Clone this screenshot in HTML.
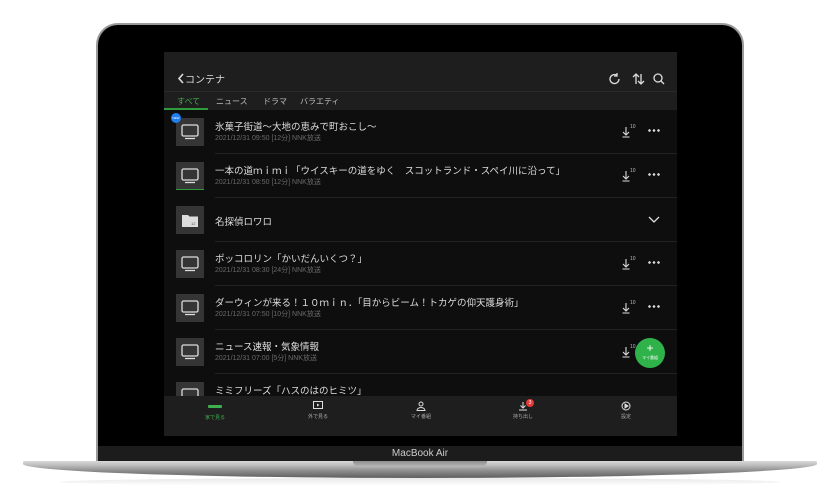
<!DOCTYPE html>
<html><head><meta charset="utf-8"><style>
*{margin:0;padding:0;box-sizing:border-box}
body{width:840px;height:502px;background:#fff;position:relative;overflow:hidden;font-family:"Liberation Sans","Noto Sans CJK JP",sans-serif}
.lid{position:absolute;left:96px;top:23px;width:648px;height:440px;background:#000;border-radius:22px 22px 0 0;border:2px solid #9a9a9a;border-bottom:none}
.chin{position:absolute;left:98px;top:446px;width:644px;height:15px;background:#1c1c1c;color:#ccc;font-size:10px;text-align:center;line-height:15px}
.base{position:absolute;left:23px;top:461px;width:794px;height:17px;background:linear-gradient(#d9d9d9 0,#bdbdbd 25%,#8a8a8a 60%,#5e5e5e 100%);border-radius:2px 2px 60% 60%/2px 2px 100% 100%}
.notch{position:absolute;left:353px;top:461px;width:134px;height:6px;background:linear-gradient(#8f8f8f,#b9b9b9);border-radius:0 0 6px 6px}
.shadow{position:absolute;left:60px;top:478px;width:720px;height:8px;background:linear-gradient(#e8e8e8,#fff);border-radius:50%}
.scr{position:absolute;left:164px;top:52px;width:513px;height:384px;background:#0e0e0e;overflow:hidden}
.hdr{position:absolute;left:0;top:0;width:513px;height:58px;background:#1e1e1e}
.title{position:absolute;left:13px;top:19px;color:#ddd;font-size:10px}
.tabs{position:absolute;top:39px;left:0;width:513px;height:18px;border-top:1px solid #2a2a2a;font-size:8px;color:#bbb}
.tabs span{position:absolute;top:4px}
.row{position:absolute;left:0;width:513px;height:44px}
.row .sep{position:absolute;left:51px;right:0;bottom:0;height:1px;background:#222}
.th{position:absolute;left:12px;top:8px;width:28px;height:28px;background:#353535}
.t1{position:absolute;left:51px;top:9px;color:#ddd;font-size:9.5px;white-space:nowrap}
.t2{position:absolute;left:51px;top:23px;color:#6a6a6a;font-size:7px}
.dl{position:absolute;left:457px;top:14px}
.more{position:absolute;left:484px;top:19px;width:12px;height:3px;background:radial-gradient(circle at 1.5px 1.5px,#ddd 1.2px,transparent 1.4px) 0 0/4.5px 3px repeat-x}
.nav{position:absolute;left:0;top:344px;width:513px;height:40px;background:#1e1e1e;font-size:5px;color:#aaa}
.nav div{position:absolute;top:3px;width:40px;text-align:center}
</style></head><body>
<div class="lid"></div>
<div class="chin">MacBook Air</div>
<div class="shadow"></div>
<div class="base"></div>
<div class="notch"></div>
<div class="scr">
 <div class="hdr">
  <div class="title"><svg width="8" height="11" viewBox="0 0 8 11" style="vertical-align:-1px"><path d="M6 1L2 5.5L6 10" stroke="#ddd" stroke-width="1.6" fill="none"/></svg>コンテナ</div>
  <svg style="position:absolute;left:444px;top:20px" width="60" height="14" viewBox="0 0 60 14" fill="none" stroke="#ddd" stroke-width="1.3">
   <path d="M11 7a4.5 4.5 0 1 1-2-3.7M9 1v3h-3"/>
   <path d="M28 12V2M25 5l3-3 3 3M33 2v10M30 9l3 3 3-3"/>
   <circle cx="50" cy="6" r="4"/><path d="M53 9l3 3"/>
  </svg>
  <div class="tabs">
   <span style="left:13px;color:#3fae4f">すべて</span><span style="left:52px">ニュース</span><span style="left:99px">ドラマ</span><span style="left:136px">バラエティ</span>
   <div style="position:absolute;left:0;top:16px;width:44px;height:2px;background:#2e9c3e"></div>
  </div>
 </div>
 <div class="row" style="top:58px"><div class="th"></div><svg style="position:absolute;left:17px;top:14px" width="18" height="16" viewBox="0 0 18 16" fill="none" stroke="#ddd" stroke-width="1.3"><rect x="1" y="1" width="16" height="11" rx="1.5"/><path d="M4 14.5h10"/></svg><div style="position:absolute;left:7px;top:3px;width:10px;height:10px;border-radius:50%;background:#1f7ef0;color:#fff;font-size:3px;text-align:center;line-height:10px">NEW</div><div class="t1">氷菓子街道〜大地の恵みで町おこし〜</div><div class="t2">2021/12/31 09:50 [12分] NNK放送</div><svg class="dl" width="16" height="16" viewBox="0 0 16 16"><path d="M5 3v8M2 8l3 3 3-3M1.5 13h7" stroke="#ddd" stroke-width="1.1" fill="none"/><text x="9" y="4" font-size="5" fill="#bbb">10</text></svg><div class="more"></div><div class="sep"></div></div>
 <div class="row" style="top:102px"><div class="th"></div><div style="position:absolute;left:12px;top:35px;width:28px;height:1px;background:#2e9c3e"></div><svg style="position:absolute;left:17px;top:14px" width="18" height="16" viewBox="0 0 18 16" fill="none" stroke="#ddd" stroke-width="1.3"><rect x="1" y="1" width="16" height="11" rx="1.5"/><path d="M4 14.5h10"/></svg><div class="t1">一本の道ｍｉｍｉ「ウイスキーの道をゆく　スコットランド・スペイ川に沿って」</div><div class="t2">2021/12/31 08:50 [12分] NNK放送</div><svg class="dl" width="16" height="16" viewBox="0 0 16 16"><path d="M5 3v8M2 8l3 3 3-3M1.5 13h7" stroke="#ddd" stroke-width="1.1" fill="none"/><text x="9" y="4" font-size="5" fill="#bbb">10</text></svg><div class="more"></div><div class="sep"></div></div>
 <div class="row" style="top:146px"><div class="th"></div><svg style="position:absolute;left:17px;top:14px" width="18" height="16" viewBox="0 0 18 16"><path d="M1 3h6l1.5 1.5H17V15H1z" fill="#ddd"/><text x="10" y="13" font-size="4" fill="#555">12</text></svg><div class="t1" style="top:16px">名探偵ロワロ</div><svg style="position:absolute;left:484px;top:18px" width="12" height="8" viewBox="0 0 12 8"><path d="M1 1l5 5 5-5" stroke="#ddd" stroke-width="1.3" fill="none"/></svg><div class="sep"></div></div>
 <div class="row" style="top:190px"><div class="th"></div><svg style="position:absolute;left:17px;top:14px" width="18" height="16" viewBox="0 0 18 16" fill="none" stroke="#ddd" stroke-width="1.3"><rect x="1" y="1" width="16" height="11" rx="1.5"/><path d="M4 14.5h10"/></svg><div class="t1">ポッコロリン「かいだんいくつ？」</div><div class="t2">2021/12/31 08:30 [24分] NNK放送</div><svg class="dl" width="16" height="16" viewBox="0 0 16 16"><path d="M5 3v8M2 8l3 3 3-3M1.5 13h7" stroke="#ddd" stroke-width="1.1" fill="none"/><text x="9" y="4" font-size="5" fill="#bbb">10</text></svg><div class="more"></div><div class="sep"></div></div>
 <div class="row" style="top:234px"><div class="th"></div><svg style="position:absolute;left:17px;top:14px" width="18" height="16" viewBox="0 0 18 16" fill="none" stroke="#ddd" stroke-width="1.3"><rect x="1" y="1" width="16" height="11" rx="1.5"/><path d="M4 14.5h10"/></svg><div class="t1">ダーウィンが来る！１０ｍｉｎ．「目からビーム！トカゲの仰天護身術」</div><div class="t2">2021/12/31 07:50 [10分] NNK放送</div><svg class="dl" width="16" height="16" viewBox="0 0 16 16"><path d="M5 3v8M2 8l3 3 3-3M1.5 13h7" stroke="#ddd" stroke-width="1.1" fill="none"/><text x="9" y="4" font-size="5" fill="#bbb">10</text></svg><div class="more"></div><div class="sep"></div></div>
 <div class="row" style="top:278px"><div class="th"></div><svg style="position:absolute;left:17px;top:14px" width="18" height="16" viewBox="0 0 18 16" fill="none" stroke="#ddd" stroke-width="1.3"><rect x="1" y="1" width="16" height="11" rx="1.5"/><path d="M4 14.5h10"/></svg><div class="t1">ニュース速報・気象情報</div><div class="t2">2021/12/31 07:00 [5分] NNK放送</div><svg class="dl" width="16" height="16" viewBox="0 0 16 16"><path d="M5 3v8M2 8l3 3 3-3M1.5 13h7" stroke="#ddd" stroke-width="1.1" fill="none"/><text x="9" y="4" font-size="5" fill="#bbb">10</text></svg><div class="more"></div><div class="sep"></div></div>
 <div class="row" style="top:322px"><div class="th"></div><svg style="position:absolute;left:17px;top:14px" width="18" height="16" viewBox="0 0 18 16" fill="none" stroke="#ddd" stroke-width="1.3"><rect x="1" y="1" width="16" height="11" rx="1.5"/></svg><div class="t1">ミミフリーズ「ハスのはのヒミツ」</div></div>
 <div style="position:absolute;left:471px;top:286px;width:30px;height:30px;border-radius:50%;background:#2fb24a;color:#fff;text-align:center"><div style="font-size:12px;line-height:14px;margin-top:3px">+</div><div style="font-size:4px">マイ番組</div></div>
 <div class="nav">
  <div style="left:31px;color:#3fae4f"><div style="position:static;width:14px;height:3px;background:#3fae4f;margin:6px auto 6px;border-radius:1px"></div>家で見る</div>
  <div style="left:134px"><svg width="10" height="9" viewBox="0 0 10 9" style="margin-top:2px"><rect x=".5" y=".5" width="9" height="7" fill="none" stroke="#ddd"/><path d="M4 2.5v3l2.5-1.5z" fill="#ddd"/></svg><br><span style="position:relative;top:1px">外で見る</span></div>
  <div style="left:237px"><svg width="10" height="10" viewBox="0 0 10 10" style="margin-top:2px" fill="none" stroke="#ddd"><circle cx="5" cy="3" r="2"/><path d="M1 9.5a4 3 0 0 1 8 0z"/></svg><br>マイ番組</div>
  <div style="left:339px"><svg width="10" height="10" viewBox="0 0 10 10" style="margin-top:2px" fill="none" stroke="#ddd"><path d="M5 1v6M2.5 4.5L5 7l2.5-2.5M1 9h8"/></svg><br>持ち出し<span style="position:absolute;left:23px;top:0;width:8px;height:8px;border-radius:50%;background:#e53935;color:#fff;font-size:5px;line-height:8px">3</span></div>
  <div style="left:442px"><svg width="10" height="10" viewBox="0 0 10 10" style="margin-top:2px" fill="none" stroke="#ddd"><circle cx="5" cy="5" r="4"/><path d="M4 3v4l3-2z" fill="#ddd"/></svg><br>設定</div>
 </div>
</div>
</body></html>
